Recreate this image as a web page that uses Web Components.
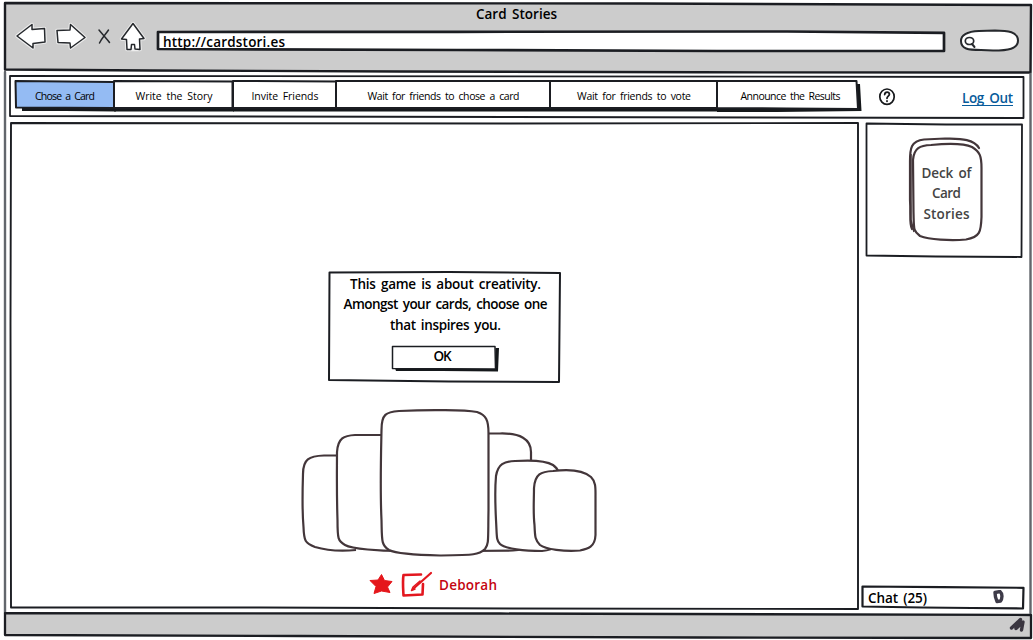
<!DOCTYPE html>
<html lang="en">
<head>
<meta charset="utf-8">
<title>Card Stories</title>
<style>
html, body { margin: 0; background: #fff; }
body { width: 1033px; height: 640px; overflow: hidden; font-family: "Open Sans", "Noto Sans", sans-serif; color: #000; }
</style>
</head>
<body>
<story-window></story-window>
<script>
const make = (name, html, setup) => {
  const template = document.createElement('template');
  template.innerHTML = html;
  customElements.define(name, class extends HTMLElement {
    constructor() {
      super();
      this.attachShadow({ mode: 'open' }).append(template.content.cloneNode(true));
    }
    connectedCallback() { if (setup) setup(this, this.shadowRoot); }
  });
};

/* A single line of lettering, tracked to fill the width in "w". */
make('ink-text', `
<style>
:host { display: block; flex: none; line-height: 20px; font-size: 13.5px; font-weight: 600; }
span { display: block; width: max-content; white-space: pre; word-spacing: 2px; }
</style><span><slot></slot></span>`, (host, root) => {
  const w = +host.getAttribute('w');
  host.style.width = w + 'px';
  const span = root.querySelector('span');
  const gap = (w - span.getBoundingClientRect().width) / (host.textContent.length - 1);
  span.style.letterSpacing = gap.toFixed(3) + 'px';
});

/* A hand-drawn outline behind slotted content; "d" is in the box's own pixels. */
make('sketch-frame', `
<style>
:host { display: block; position: relative; z-index: 0; box-sizing: border-box; }
svg { position: absolute; left: 0; top: 0; width: 100%; height: 100%; overflow: visible; z-index: -1; }
.line { stroke: var(--line, #1b1d22); stroke-linejoin: round; stroke-linecap: round; }
</style>
<svg><path class="shade" fill="#15181b"/><path class="line"/></svg><slot></slot>`, (host, root) => {
  const line = root.querySelector('.line');
  line.setAttribute('d', host.getAttribute('d'));
  line.setAttribute('fill', host.getAttribute('fill') || '#fff');
  line.setAttribute('stroke-width', host.getAttribute('stroke') || 2);
  root.querySelector('.shade').setAttribute('d', host.getAttribute('shade') || '');
});

make('browser-bar', `
<style>
:host { display: block; height: 74px; }
.bar { height: 74px; display: flex; flex-direction: column; }
.title { height: 22px; padding: 4px 0 0 476px; box-sizing: border-box; }
nav { display: flex; align-items: flex-start; height: 30px; padding-left: 16px; }
svg { display: block; flex: none; overflow: visible; fill: #fff; stroke: #26292d; stroke-width: 1.5; stroke-linejoin: round; stroke-linecap: round; }
.url { width: 789px; height: 21px; margin: 9px 0 0 11px; padding: 1px 0 0 6px; }
.halo { stroke: #eee; stroke-width: 3.5; }
</style>
<sketch-frame class="bar" fill="#ccc" stroke="2.4" d="M5 3L300 3.3 640 3.5 1031 5L1030.5 72.5 700 72.3 400 71.5 150 70.5 5 69.5Z">
 <div class="title"><ink-text w="81">Card Stories</ink-text></div>
 <nav>
  <svg width="33" height="30" viewBox="16 22 33 30"><path class="halo" d="M17 36L32 24.5V29.5L44.5 28.5 45 42 33 43.5V48Z"/><path d="M17 36L32 24.5V29.5L44.5 28.5 45 42 33 43.5V48Z"/></svg>
  <svg width="46" height="30" viewBox="49 22 46 30"><path class="halo" d="M57 30.5L70 30 70.5 24.5 85 37.5 70.5 48 70 43 58 42.5Z"/><path d="M57 30.5L70 30 70.5 24.5 85 37.5 70.5 48 70 43 58 42.5Z"/></svg>
  <svg width="24" height="30" viewBox="95 22 24 30"><path fill="none" d="M99 30C103 35 107 39 109.500 42.500M108.500 30C105 35 102 38 99.500 43"/></svg>
  <svg width="27" height="30" viewBox="119 22 27 30"><path class="halo" d="M121.500 39L133 23.500 144 38.500 139.500 39 140 49.500 127 49.500 126.500 39.500Z"/><path d="M121.500 39L133 23.500 144 38.500 139.500 39 140 49.500 135 49 134.500 44.500H131.500L131 49.500 127 49.500 126.500 39.500Z"/></svg>
  <sketch-frame class="url" d="M1 1L300 .8 630 .5 787 1.800V20L560 20 300 19 1 18Z" stroke="2.700"><ink-text w="122">http://cardstori.es</ink-text></sketch-frame>
  <svg width="74" height="30" viewBox="946 22 74 30"><path stroke-width="2" d="M961 41C961 34 968 31.500 979 31L995 30.500C1008 30.500 1018 32 1018 40.500 1018 49 1008 50.500 993 50.500L981 50C968 50 961 49 961 41Z"/><ellipse cx="969.500" cy="41" rx="4.200" ry="3.500" stroke-width="1.700"/><path stroke-width="2" d="M972 44L974.500 47"/></svg>
 </nav>
</sketch-frame>`);

make('story-steps', `
<style>
:host { display: block; width: 1014px; height: 42px; }
.row { height: 42px; display: flex; padding: 5px 0 0 5px; }
.tabs { width: 844px; height: 30px; display: grid; grid-template-columns: 99px 119px 103px 214px 167px 142px; flex: none; }
.tabs > * { display: flex; align-items: center; justify-content: center; height: 27px; }
.tabs ink-text { font-size: 10.500px; font-weight: 500; margin: 2px 0 0 1px; }
.help { margin: 5px 0 0 18px; flex: none; width: 20px; height: 20px; }
a { display: block; box-sizing: border-box; margin: 8px 0 0 65px; height: 17px; color: #075b9b; border-bottom: 1px solid #075b9b; }
a ink-text { line-height: 18px; }
</style>
<sketch-frame class="row" stroke="1.800" d="M0 0L500 .3 1013.500 1V42L500 41 0 40Z">
 <div class="tabs">
  <sketch-frame fill="#94bbf3" shade="M7 26H101V30.500L50 30 7 30Z" d="M.5 0L99 1V27L1 26.500Z"><ink-text w="60">Chose a Card</ink-text></sketch-frame>
  <sketch-frame shade="M0 26H120V30.500H0Z" d="M0 0L118.500 .5V27L0 27Z"><ink-text w="77">Write the Story</ink-text></sketch-frame>
  <sketch-frame shade="M0 26H103V30.500H0Z" d="M0 0L103 .5V27L0 27Z"><ink-text w="67">Invite Friends</ink-text></sketch-frame>
  <sketch-frame shade="M0 26H214V30.500H0Z" d="M0 0L214 0V27L0 27Z"><ink-text w="152">Wait for friends to chose a card</ink-text></sketch-frame>
  <sketch-frame shade="M0 26H167V30.500H0Z" d="M0 0L167 0V27L0 27Z"><ink-text w="114">Wait for friends to vote</ink-text></sketch-frame>
  <sketch-frame shade="M0 26H136L139 3 143 3 144.500 30 60 31 0 31Z" d="M0 0L139.500 0 141 28 70 27.500 0 27Z"><ink-text w="100" style="margin-left:5px">Announce the Results</ink-text></sketch-frame>
 </div>
 <svg class="help" viewBox="877 86 20 20" fill="none" stroke="#17191c" stroke-linecap="round"><ellipse cx="887" cy="96.700" rx="7.200" ry="7.700" stroke-width="1.700"/><path d="M884.700 94.500C885 91.500 889.500 91.500 889.400 94.300 889.300 96 887 96.300 887 98.300M887 101V101.300" stroke-width="1.800"/></svg>
 <a><ink-text w="51">Log Out</ink-text></a>
</sketch-frame>`);

make('story-dialog', `
<style>
:host { display: block; width: 231px; height: 110px; }
.box { height: 110px; display: flex; flex-direction: column; align-items: center; padding: 2px 0 0 2px; }
ink-text { line-height: 20.400px; }
.ok { width: 104px; height: 23px; margin: 11px 4px 0 0; display: flex; justify-content: center; }
.ok ink-text { margin-left: -2px; }
</style>
<sketch-frame class="box" d="M.5 .5L120 0 231 1 230 110 120 109.500 0 108Z">
 <ink-text w="191">This game is about creativity.</ink-text>
 <ink-text w="204">Amongst your cards, choose one</ink-text>
 <ink-text w="111">that inspires you.</ink-text>
 <sketch-frame class="ok" stroke="1.500" shade="M3 22H103L103.500 2H107L106 25.500 50 25 4 25Z" d="M.5 .5L103 .5 103.500 23 .5 22.500Z"><ink-text w="18">OK</ink-text></sketch-frame>
</sketch-frame>`);

make('card-hand', `
<style>
:host { display: block; width: 300px; height: 150px; }
svg { display: block; fill: #fff; stroke: #43363a; stroke-width: 2.200; stroke-linejoin: round; }
</style>
<svg width="300" height="150" viewBox="300 408 300 150">
 <path d="M350 455.500H324C309 456 303 459 303 474 302.500 490 302 510 303.500 527 304 541 305 543 315 547 325 550 340 551.500 356 550"/>
 <path d="M337 452C338 438 344 435.500 355 435H400V551C380 551 352 549 345 545 338 541 337.500 539 337.500 520 336.500 490 337 470 337 452Z"/>
 <path d="M470 433.500H500C520 433 531 439 531 452V520C531 541 528 550 513 550.500L470 551Z"/>
 <path d="M496 476C498 464 504 461.500 515 461 530 460 545 460 553 465 559 469 560 475 560 485V530C560 546 555 550 542 551 525 551 505 549 500 544 496 540 497 536 496 520 495 500 495 487 496 476Z"/>
 <path d="M534 488C535 474 541 471.500 553 471 569 469 583 470 591 477 596 482 595.500 488 595.500 497V535C595 547 588 549 580 550.500 565 552 545 549 540 545 535 540 535 537 534.500 525 533 512 534 500 534 488Z"/>
 <path d="M381.500 430C381.500 414 386 412 399 411 430 409.500 465 410 477 412 486 415 488.500 420 488.500 433V510C488 540 489 544 485 549 479 555 474 555 440 555.500 415 555 397 554 389 550 381 545 382 540 381.500 520 380 490 381 455 381.500 430Z"/>
</svg>`);

make('player-tag', `
<style>
:host { display: flex; height: 30px; color: #c40410; }
svg { display: block; flex: none; }
ink-text { margin-top: 5px; }
</style>
<svg width="71" height="30" viewBox="368 570 71 30">
 <path fill="#e5161b" stroke="#e5161b" stroke-linejoin="round" d="M381.500 574.500L384.500 580.500 392 581.500 387.500 587 390 592.500 381.500 591 374 593.500 376 586.500 370 580.500 378 580Z"/>
 <g fill="none" stroke="#e3171f" stroke-linecap="round" stroke-linejoin="round"><path stroke-width="2.600" d="M421 574.500L403.500 575C402.500 581 403 587 403.500 595.500L422.500 594.500 423 584"/><path stroke-width="2.200" d="M431 573L413 589"/><path stroke-width="1.500" d="M420 581L413 587 411.500 590.500 415 589"/></g>
</svg>
<ink-text w="58">Deborah</ink-text>`);

make('story-table', `
<style>
:host { display: block; width: 848px; height: 486px; }
.table { height: 486px; display: flex; flex-direction: column; align-items: flex-start; padding-top: 149px; }
story-dialog { margin-left: 319px; }
card-hand { margin: 26px 0 0 290px; }
player-tag { margin: 12px 0 0 358px; }
</style>
<sketch-frame class="table" stroke="1.900" d="M1 0L500 .5 848 0V486L500 485.500 250 484.500 1 484.500 .5 200Z">
 <story-dialog></story-dialog><card-hand></card-hand><player-tag></player-tag>
</sketch-frame>`);

make('card-deck', `
<style>
:host { display: block; width: 156px; height: 134px; margin-left: 4px; }
.panel { height: 134px; padding: 13px 0 0 40px; }
.deck { width: 80px; height: 106px; display: flex; flex-direction: column; align-items: center; padding: 27px 0 0 1px; color: #444; }
.deck ink-text { line-height: 20.300px; }
.pile { position: absolute; left: 0; top: 0; z-index: -1; fill: #fff; stroke: #43363a; stroke-width: 2.200; }
</style>
<sketch-frame class="panel" stroke="1.800" d="M.5 .5L80 1.500 156 1.500 155.500 134 70 133.500 .5 132.500Z">
 <sketch-frame class="deck" d="">
  <svg class="pile" width="80" height="106" viewBox="906 136 80 106"><path d="M979 148C973 138 958 139 945 138.500L924 139.500C911 141 910 148 910 161V200C911 215 909 223 912 229" stroke-linecap="round"/><path stroke-width="1.500" d="M911 154V220L914 232" fill="none"/><path d="M913 160C914 148 920 145.500 931 145 947 143.500 963 143 972 147 980 152 981.500 156 981.500 168V217C981 232 980 237 966 239.500 950 241 929 239.500 920 236 913 231 914 229 913.500 212Z"/></svg>
  <ink-text w="50">Deck of</ink-text><ink-text w="29">Card</ink-text><ink-text w="46">Stories</ink-text>
 </sketch-frame>
</sketch-frame>`);

make('chat-bar', `
<style>
:host { display: block; width: 162px; height: 22px; }
.chat { height: 22px; display: flex; padding-left: 6px; }
svg { display: block; margin: 3px 0 0 64px; }
ink-text { line-height: 22px; }
</style>
<sketch-frame class="chat" stroke="2.200" d="M.5 -.5L80 .2 161.500 .8 161 21.500 110 21 60 20.500 .5 19.500Z">
 <ink-text w="59">Chat (25)</ink-text>
 <svg width="14" height="15" viewBox="991 589 14 15"><path d="M995 591.500L1000 590.500C1003 593 1002 598 1000.500 600L997 600.500 995.500 596Z" fill="#fff" stroke="#3e3b49" stroke-width="3.400" stroke-linejoin="round"/></svg>
</sketch-frame>`);

make('story-window', `
<style>
:host { display: flex; flex-direction: column; width: 1033px; height: 640px; }
.page { --line: #62666c; height: 539px; padding: 2px 0 0 10px; display: flex; flex-direction: column; }
.page > * { --line: #1b1d22; }
.columns { display: flex; margin-top: 5px; height: 486px; }
aside { width: 162px; margin-left: 4px; display: flex; flex-direction: column; justify-content: space-between; }
.foot { height: 26px; display: flex; justify-content: flex-end; padding: 2px 5px 0 0; }
</style>
<browser-bar></browser-bar>
<sketch-frame class="page" d="M5 -2V539M1030.500 0V539" stroke="2.400">
 <story-steps></story-steps>
 <div class="columns"><story-table></story-table><aside><card-deck></card-deck><chat-bar></chat-bar></aside></div>
</sketch-frame>
<sketch-frame class="foot" fill="#ccc" stroke="2.300" d="M5 .2L500 .5 1031 2 1031 25 700 24.500 300 23 5 22Z">
 <svg width="20" height="18" viewBox="1008 616 20 18"><path d="M1011.500 629L1020.500 620.500 1016 629.500 1023 623 1021.500 631" fill="none" stroke="#3a3640" stroke-width="3.400" stroke-linejoin="round" stroke-linecap="round"/></svg>
</sketch-frame>`);
</script>
</body>
</html>
